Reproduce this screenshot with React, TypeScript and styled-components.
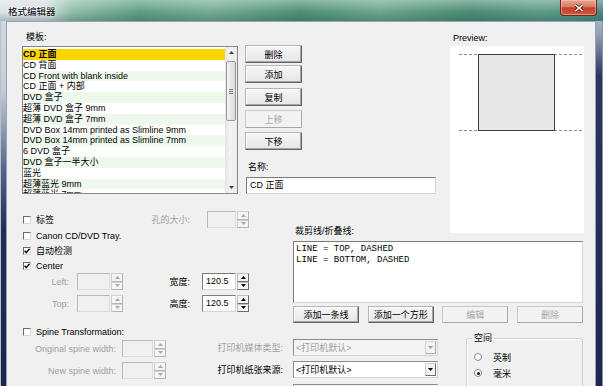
import React from "react";
import styled, { createGlobalStyle } from "styled-components";

const GlobalStyle = createGlobalStyle`
  html, body {
    margin: 0;
    padding: 0;
    background: #fff;
  }
  body {
    width: 603px;
    height: 386px;
    overflow: hidden;
    font-family: "Liberation Sans", "Noto Sans CJK SC", sans-serif;
    font-size: 9px;
    color: #000;
  }
  * {
    box-sizing: border-box;
  }
`;

const templates = [
  "CD 正面",
  "CD 背面",
  "CD Front with blank inside",
  "CD 正面 + 内部",
  "DVD 盒子",
  "超薄 DVD 盒子 9mm",
  "超薄 DVD 盒子 7mm",
  "DVD Box 14mm printed as Slimline 9mm",
  "DVD Box 14mm printed as Slimline 7mm",
  "6 DVD 盒子",
  "DVD 盒子一半大小",
  "蓝光",
  "超薄蓝光 9mm",
  "超薄蓝光 7mm",
];

/* ---------- window chrome ---------- */

const Window = styled.div`
  width: 603px;
  height: 386px;
  overflow: hidden;
  display: flex;
  flex-direction: column;
  padding: 0 7px 0 6px;
  background:
    linear-gradient(to bottom, #d3dbe1 0, #c4ced8 90px, #55648a 170px, #222c58 230px, #1c2550 100%) left / 6px 100% no-repeat,
    linear-gradient(to bottom, #c9d4da 0, #8e9fb4 35px, #2a3762 75px, #1d2650 100%) right / 7px 100% no-repeat,
    #1d2650;
  box-shadow: inset 1px 0 #b9c0c8, inset -1px 0 #8a94a8;
`;

const TitleBar = styled.div`
  height: 21px;
  margin: 0 -7px 0 -6px;
  display: flex;
  align-items: flex-start;
  background:
    linear-gradient(to bottom, rgba(255, 255, 255, 0.35), rgba(255, 255, 255, 0) 55%, rgba(20, 50, 60, 0.25) 100%),
    linear-gradient(
      to right,
      #dde4e8 0,
      #d6e0e0 45px,
      #8fbfa7 72px,
      #5f9f85 140px,
      #75ad95 210px,
      #4f9178 300px,
      #6ca78e 380px,
      #4c8d75 470px,
      #5e9c86 540px,
      #4a8a82 603px
    );
`;

const Title = styled.div`
  margin: 6px 0 0 8px;
  font-size: 9.5px;
  line-height: 12px;
  text-shadow: 0 0 4px #fff, 0 0 2px #fff;
`;

const CloseButton = styled.div`
  margin: 0 6px 0 auto;
  width: 37px;
  height: 16px;
  border: 1px solid #6a2a20;
  border-top: none;
  border-radius: 0 0 4px 4px;
  background: linear-gradient(to bottom, #e9a696 0, #d97a64 45%, #c2422b 52%, #cf5a3e 100%);
  box-shadow: inset 0 0 0 1px rgba(255, 210, 200, 0.45);
  display: flex;
  align-items: center;
  justify-content: center;
`;

const Client = styled.div`
  flex: 1;
  background: #f0f0f0;
  border: 1px solid #97a4b3;
  border-bottom: none;
  padding: 8px 11px 0 15px;
  overflow: hidden;
`;

const Layout = styled.div`
  display: grid;
  grid-template-columns: 271px 157px 134px;
  grid-template-rows: 166px 42px 86px auto;
  grid-template-areas:
    "tpl tpl prev"
    "opts lbl prev"
    "opts lines lines"
    "bottom bottom bottom";
`;

/* ---------- generic controls ---------- */

const Label = styled.div<{ $indent?: number; $h?: number; $disabled?: boolean }>`
  height: ${(p) => p.$h ?? 14}px;
  line-height: ${(p) => p.$h ?? 14}px;
  padding-left: ${(p) => p.$indent ?? 0}px;
  white-space: nowrap;
  color: ${(p) => (p.$disabled ? "#a0a0a0" : "#000")};
`;

const RightLabel = styled.div<{ $w: number; $disabled?: boolean }>`
  width: ${(p) => p.$w}px;
  flex: none;
  text-align: right;
  white-space: nowrap;
  color: ${(p) => (p.$disabled ? "#a0a0a0" : "#000")};
`;

const Button = styled.div<{ $w?: number; $h?: number; $disabled?: boolean }>`
  width: ${(p) => p.$w ?? 57}px;
  height: ${(p) => p.$h ?? 18}px;
  display: flex;
  align-items: center;
  justify-content: center;
  border: 1px solid;
  border-color: ${(p) => (p.$disabled ? "#c8c8c8 #a8a8a8 #a8a8a8 #c8c8c8" : "#b4b4b4 #646464 #646464 #b4b4b4")};
  border-radius: 1px;
  background: ${(p) => (p.$disabled ? "#f2f2f2" : "linear-gradient(to bottom, #f6f6f6, #e6e6e6)")};
  box-shadow: ${(p) => (p.$disabled ? "none" : "inset -1px -1px #a6a6a6, inset 1px 1px #fff")};
  color: ${(p) => (p.$disabled ? "#a6a6a6" : "#000")};
  white-space: nowrap;
`;

const ButtonGroup = styled.div<{ $gap: number; $top: number }>`
  display: flex;
  flex-direction: column;
  gap: ${(p) => p.$gap}px;
  margin-top: ${(p) => p.$top}px;
`;

const TextBox = styled.div<{ $w: number; $disabled?: boolean }>`
  width: ${(p) => p.$w}px;
  height: 17px;
  flex: none;
  border: 1px solid;
  border-color: ${(p) => (p.$disabled ? "#b8b8b8 #dcdcdc #dcdcdc #b8b8b8" : "#7c7c7c #d6d6d6 #d6d6d6 #7c7c7c")};
  background: ${(p) => (p.$disabled ? "#f0f0f0" : "#fff")};
  padding-left: 3px;
  line-height: 15px;
  white-space: nowrap;
  overflow: hidden;
`;

const SpinWrap = styled.div<{ $ml?: number }>`
  display: flex;
  gap: 1px;
  height: 17px;
  margin-left: ${(p) => p.$ml ?? 0}px;
  flex: none;
`;

const SpinButtons = styled.div`
  width: 12px;
  display: flex;
  flex-direction: column;
`;

const SpinButton = styled.div<{ $disabled?: boolean }>`
  flex: 1;
  display: flex;
  align-items: center;
  justify-content: center;
  border: 1px solid;
  border-color: ${(p) => (p.$disabled ? "#d0d0d0 #b4b4b4 #b4b4b4 #d0d0d0" : "#c0c0c0 #6c6c6c #6c6c6c #c0c0c0")};
  background: #f4f4f4;
  color: ${(p) => (p.$disabled ? "#a8a8a8" : "#000")};
`;

const Arrow = ({ down, color }: { down?: boolean; color?: string }) => (
  <svg width="5" height="3" viewBox="0 0 5 3" style={{ display: "block" }}>
    <path d={down ? "M0 0H5L2.5 3Z" : "M0 3H5L2.5 0Z"} fill={color ?? "currentColor"} />
  </svg>
);

const Spin = ({ w, ml, value, disabled }: { w: number; ml?: number; value?: string; disabled?: boolean }) => (
  <SpinWrap $ml={ml}>
    <TextBox $w={w} $disabled={disabled}>
      {value}
    </TextBox>
    <SpinButtons>
      <SpinButton $disabled={disabled}>
        <Arrow />
      </SpinButton>
      <SpinButton $disabled={disabled}>
        <Arrow down />
      </SpinButton>
    </SpinButtons>
  </SpinWrap>
);

const CheckItem = styled.div<{ $w?: number; $h?: number }>`
  display: flex;
  align-items: center;
  gap: 5px;
  height: ${(p) => p.$h ?? 15}px;
  width: ${(p) => (p.$w ? `${p.$w}px` : "auto")};
  padding-left: 1px;
  flex: none;
  white-space: nowrap;
`;

const CheckBox = styled.span`
  width: 8px;
  height: 8px;
  flex: none;
  border: 1px solid;
  border-color: #6c6c6c #d6d6d6 #d6d6d6 #6c6c6c;
  background: #fff;
  display: flex;
  align-items: center;
  justify-content: center;
`;

const Check = ({ checked, children, w, h }: { checked?: boolean; children: React.ReactNode; w?: number; h?: number }) => (
  <CheckItem $w={w} $h={h}>
    <CheckBox>
      {checked && (
        <svg width="6" height="6" viewBox="0 0 6 6" style={{ display: "block" }}>
          <path d="M0.6 2.8L2.3 4.6L5.5 0.8" fill="none" stroke="#000" strokeWidth="1.4" />
        </svg>
      )}
    </CheckBox>
    {children}
  </CheckItem>
);

const Row = styled.div<{ $h?: number; $mt?: number }>`
  display: flex;
  align-items: center;
  height: ${(p) => p.$h ?? 17}px;
  margin-top: ${(p) => p.$mt ?? 0}px;
`;

const Select = styled.div<{ $disabled?: boolean }>`
  width: 145px;
  height: 17px;
  margin-left: 8px;
  flex: none;
  display: flex;
  align-items: center;
  border: 1px solid;
  border-color: #8c8c8c #d4d4d4 #d4d4d4 #8c8c8c;
  background: ${(p) => (p.$disabled ? "#f4f4f4" : "#fff")};
  color: ${(p) => (p.$disabled ? "#9c9c9c" : "#000")};
  padding-left: 2px;
  white-space: nowrap;
`;

const DropButton = styled.span<{ $disabled?: boolean }>`
  margin-left: auto;
  margin-right: 1px;
  width: 11px;
  height: 13px;
  display: flex;
  align-items: center;
  justify-content: center;
  border: 1px solid;
  border-color: ${(p) => (p.$disabled ? "#d4d4d4 #b0b0b0 #b0b0b0 #d4d4d4" : "#d0d0d0 #707070 #707070 #d0d0d0")};
  background: #f2f2f2;
  color: ${(p) => (p.$disabled ? "#a0a0a0" : "#000")};
`;

/* ---------- template list ---------- */

const TemplateArea = styled.div`
  grid-area: tpl;
`;

const TemplateRow = styled.div`
  display: flex;
  align-items: flex-start;
`;

const ListBox = styled.div`
  width: 216px;
  height: 148px;
  margin-top: 2px;
  border: 1px solid #828790;
  background: #fff;
  display: flex;
  overflow: hidden;
`;

const Items = styled.div`
  flex: 1;
  padding-top: 2px;
  overflow: hidden;
`;

const Item = styled.div<{ $sel?: boolean; $alt?: boolean }>`
  height: 10.8px;
  line-height: 10.8px;
  white-space: nowrap;
  background: ${(p) => (p.$sel ? "#fcd400" : p.$alt ? "#eef8ec" : "#fff")};
  font-weight: ${(p) => (p.$sel ? 700 : 400)};
`;

const VScroll = styled.div`
  width: 12px;
  display: flex;
  flex-direction: column;
  background: linear-gradient(to right, #e4e4e4, #f3f3f3 40%, #ececec);
`;

const ScrollArrow = styled.div`
  height: 11px;
  display: flex;
  align-items: center;
  justify-content: center;
  color: #404040;
`;

const ScrollTrack = styled.div`
  flex: 1;
`;

const Thumb = styled.div`
  margin: 3px 1px 0;
  height: 60px;
  border: 1px solid #999;
  border-radius: 2px;
  background: linear-gradient(to right, #f4f4f4, #dadada);
  display: flex;
  flex-direction: column;
  align-items: center;
  justify-content: center;
  gap: 1px;
`;

const Grip = styled.span`
  width: 4px;
  height: 1px;
  background: #7a7a7a;
`;

const SideColumn = styled.div`
  margin-left: 7px;
  display: flex;
  flex-direction: column;
`;

/* ---------- preview ---------- */

const PreviewArea = styled.div`
  grid-area: prev;
`;

const PreviewBox = styled.div`
  width: 134px;
  height: 187px;
  background: #fff;
`;

/* ---------- options ---------- */

const OptionsArea = styled.div`
  grid-area: opts;
  padding-top: 15px;
`;

const LinesLabel = styled.div`
  grid-area: lbl;
  align-self: end;
  height: 12px;
  line-height: 12px;
  margin-bottom: 1px;
  padding-left: 2px;
  white-space: nowrap;
`;

const LinesArea = styled.div`
  grid-area: lines;
`;

const LinesBox = styled.div`
  width: 290px;
  height: 62px;
  margin-top: 3px;
  border: 1px solid;
  border-color: #7c7c7c #d6d6d6 #d6d6d6 #7c7c7c;
  background: #fff;
  padding: 1.5px 0 0 2px;
  font-family: "Liberation Mono", "DejaVu Sans Mono", monospace;
  font-size: 9px;
  line-height: 11.7px;
  white-space: pre;
`;

const ActionRow = styled.div`
  width: 290px;
  margin-top: 3px;
  display: flex;
  justify-content: space-between;
`;

/* ---------- bottom ---------- */

const BottomArea = styled.div`
  grid-area: bottom;
  display: flex;
  align-items: flex-start;
`;

const SpineColumn = styled.div`
  width: 158px;
  flex: none;
  padding-top: 1px;
`;

const PrinterColumn = styled.div`
  width: 258px;
  flex: none;
  padding-top: 15px;
`;

const GroupBox = styled.div`
  position: relative;
  width: 117px;
  height: 60px;
  margin: 14px 0 0 28px;
  border: 1px solid #c9cfd4;
  border-radius: 3px;
  box-shadow: inset 1px 1px #fff;
  padding: 11px 0 0 7px;
  display: flex;
  flex-direction: column;
  gap: 2px;
`;

const Legend = styled.span`
  position: absolute;
  top: -7px;
  left: 5px;
  padding: 0 2px;
  line-height: 12px;
  background: #f0f0f0;
`;

const RadioItem = styled.div`
  height: 14px;
  display: flex;
  align-items: center;
  gap: 11px;
`;

const RadioCircle = styled.span<{ $on?: boolean }>`
  width: 8px;
  height: 8px;
  border-radius: 50%;
  border: 1px solid #8a8a8a;
  background: #fff;
  display: flex;
  align-items: center;
  justify-content: center;
  &::after {
    content: "";
    width: 3px;
    height: 3px;
    border-radius: 50%;
    background: ${(p) => (p.$on ? "#111" : "transparent")};
  }
`;

export default function App() {
  return (
    <>
      <GlobalStyle />
      <Window>
        <TitleBar>
          <Title>格式编辑器</Title>
          <CloseButton>
            <svg width="10" height="8" viewBox="0 0 10 8">
              <path d="M1.5 1L8.5 7M8.5 1L1.5 7" stroke="#5a1c12" strokeWidth="3" />
              <path d="M1.5 1L8.5 7M8.5 1L1.5 7" stroke="#fff" strokeWidth="1.6" />
            </svg>
          </CloseButton>
        </TitleBar>

        <Client>
          <Layout>
            <TemplateArea>
              <Label $indent={4}>模板:</Label>
              <TemplateRow>
                <ListBox>
                  <Items>
                    {templates.map((t, i) => (
                      <Item key={t} $sel={i === 0} $alt={i % 2 === 0}>
                        {t}
                      </Item>
                    ))}
                  </Items>
                  <VScroll>
                    <ScrollArrow>
                      <Arrow />
                    </ScrollArrow>
                    <ScrollTrack>
                      <Thumb>
                        <Grip />
                        <Grip />
                        <Grip />
                      </Thumb>
                    </ScrollTrack>
                    <ScrollArrow>
                      <Arrow down />
                    </ScrollArrow>
                  </VScroll>
                </ListBox>

                <SideColumn>
                  <ButtonGroup $gap={2} $top={1}>
                    <Button>删除</Button>
                    <Button>添加</Button>
                  </ButtonGroup>
                  <ButtonGroup $gap={4} $top={5}>
                    <Button>复制</Button>
                    <Button $disabled>上移</Button>
                    <Button>下移</Button>
                  </ButtonGroup>
                  <Label $indent={3} style={{ marginTop: 10 }}>
                    名称:
                  </Label>
                  <TextBox $w={190} style={{ marginTop: 3, marginLeft: 1 }}>
                    CD 正面
                  </TextBox>
                </SideColumn>
              </TemplateRow>
            </TemplateArea>

            <PreviewArea>
              <Label $indent={3} $h={16}>
                Preview:
              </Label>
              <PreviewBox>
                <svg width="134" height="187" viewBox="0 0 134 187" style={{ display: "block" }}>
                  <path d="M9 8.5H134M9 84.5H134" stroke="#8c8c8c" strokeDasharray="3 2" />
                  <rect x="28.5" y="8.5" width="76" height="76" fill="#e8e8e8" stroke="#3c3c3c" />
                </svg>
              </PreviewBox>
            </PreviewArea>

            <OptionsArea>
              <Row>
                <Check w={120} h={17}>
                  标签
                </Check>
                <RightLabel $w={48} $disabled>
                  孔的大小:
                </RightLabel>
                <Spin w={29} ml={17} disabled />
              </Row>
              <Check>Canon CD/DVD Tray.</Check>
              <Check checked>自动检测</Check>
              <Check checked>Center</Check>
              <Row>
                <RightLabel $w={47} $disabled>
                  Left:
                </RightLabel>
                <Spin w={33} ml={8} disabled />
                <RightLabel $w={67}>宽度:</RightLabel>
                <Spin w={34} ml={12} value="120.5" />
              </Row>
              <Row $mt={5}>
                <RightLabel $w={47} $disabled>
                  Top:
                </RightLabel>
                <Spin w={33} ml={8} disabled />
                <RightLabel $w={67}>高度:</RightLabel>
                <Spin w={34} ml={12} value="120.5" />
              </Row>
            </OptionsArea>

            <LinesLabel>裁剪线/折叠线:</LinesLabel>
            <LinesArea>
              <LinesBox>{"LINE = TOP, DASHED\nLINE = BOTTOM, DASHED"}</LinesBox>
              <ActionRow>
                <Button $w={66} $h={17}>
                  添加一条线
                </Button>
                <Button $w={66} $h={17}>
                  添加一个方形
                </Button>
                <Button $w={66} $h={17} $disabled>
                  编辑
                </Button>
                <Button $w={66} $h={17} $disabled>
                  删除
                </Button>
              </ActionRow>
            </LinesArea>

            <BottomArea>
              <SpineColumn>
                <Check h={14}>Spine Transformation:</Check>
                <Row $mt={1}>
                  <RightLabel $w={94} $disabled>
                    Original spine width:
                  </RightLabel>
                  <Spin w={31} ml={6} disabled />
                </Row>
                <Row $mt={5}>
                  <RightLabel $w={94} $disabled>
                    New spine width:
                  </RightLabel>
                  <Spin w={31} ml={6} disabled />
                </Row>
              </SpineColumn>

              <PrinterColumn>
                <Row>
                  <RightLabel $w={105} $disabled style={{ paddingRight: 2 }}>
                    打印机媒体类型:
                  </RightLabel>
                  <Select $disabled>
                    &lt;打印机默认&gt;
                    <DropButton $disabled>
                      <Arrow down />
                    </DropButton>
                  </Select>
                </Row>
                <Row $mt={5}>
                  <RightLabel $w={105} style={{ paddingRight: 2 }}>
                    打印机纸张来源:
                  </RightLabel>
                  <Select>
                    &lt;打印机默认&gt;
                    <DropButton>
                      <Arrow down />
                    </DropButton>
                  </Select>
                </Row>
                <Row $mt={6}>
                  <RightLabel $w={105} />
                  <Select $disabled>
                    <DropButton $disabled>
                      <Arrow down />
                    </DropButton>
                  </Select>
                </Row>
              </PrinterColumn>

              <GroupBox>
                <Legend>空间</Legend>
                <RadioItem>
                  <RadioCircle />
                  英制
                </RadioItem>
                <RadioItem>
                  <RadioCircle $on />
                  毫米
                </RadioItem>
              </GroupBox>
            </BottomArea>
          </Layout>
        </Client>
      </Window>
    </>
  );
}
